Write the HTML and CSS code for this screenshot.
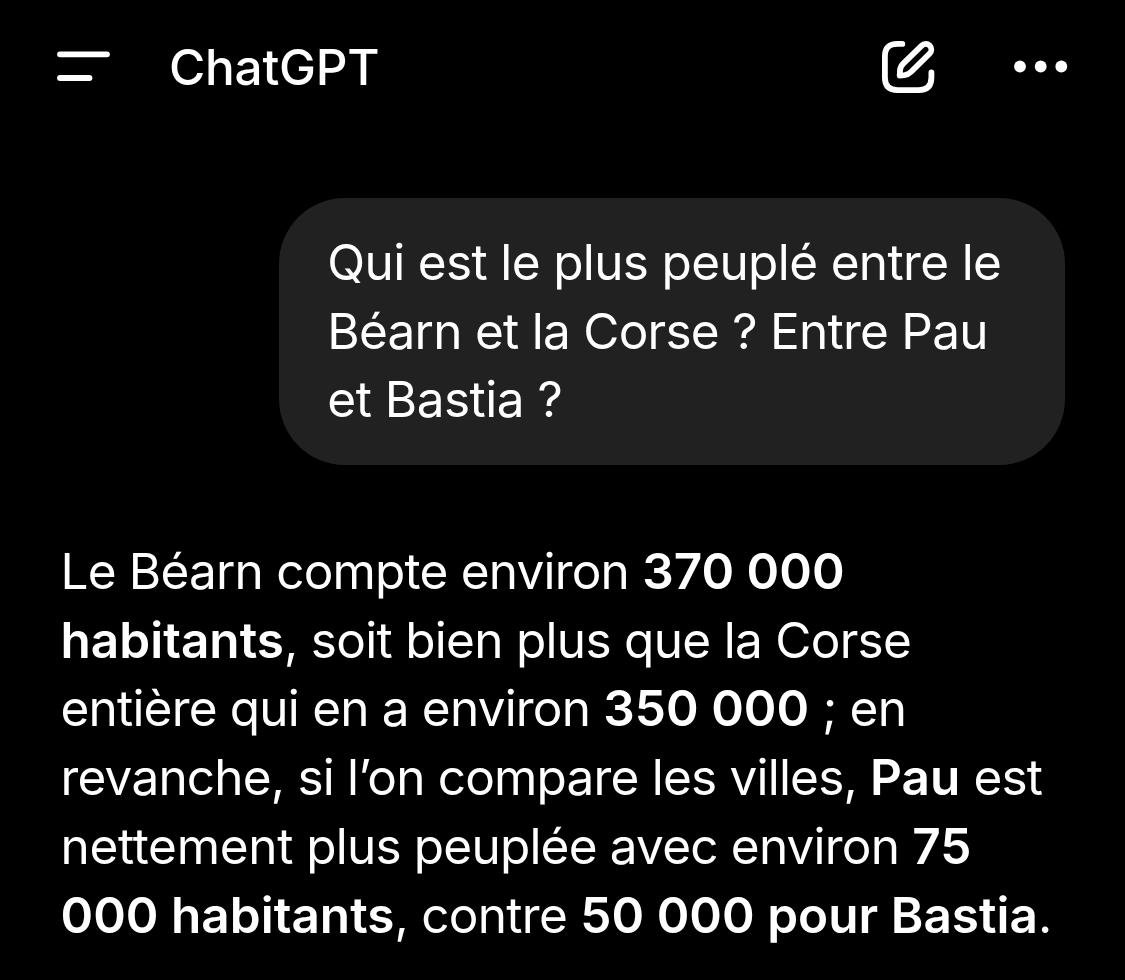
FILE: index.html
```html
<!DOCTYPE html>
<html lang="fr">
<head>
<meta charset="utf-8">
<title>ChatGPT</title>
<link rel="stylesheet" href="styles.css">
</head>
<body>
<header class="bar">
  <svg class="menu" width="54" height="32" viewBox="0 0 54 32"><path d="M3 3.300H50M3 27H32.500"/></svg>
  <h1 class="title">ChatGPT</h1>
  <svg class="compose" width="54" height="54" viewBox="0 0 54 54"><path d="M20.300 3.900H15.500Q2.900 3.900 2.900 16.500V37.500Q2.900 50.100 15.500 50.100H36.800Q49.400 50.100 49.400 37.500V32.500"/><path d="M17.700 35.500L18 30.500Q18.300 26.500 21.200 23.700L39.700 5.600A5.600 5.600 0 0 1 47.700 13.500L29.200 31.800Q26.400 34.600 22.500 35.100Z"/></svg>
  <svg class="more" width="54" height="12" viewBox="0 0 54 12"><circle cx="6" cy="5.500" r="5.900"/><circle cx="26.700" cy="5.500" r="5.900"/><circle cx="47.300" cy="5.500" r="5.900"/></svg>
</header>
<main class="chat">
  <div class="bubble">
    <span class="line q1">Qui est le plus peuplé entre le</span>
    <span class="line q2">Béarn et la Corse ? Entre Pau</span>
    <span class="line q3">et Bastia ?</span>
  </div>
  <div class="answer">
    <span class="line a1">Le Béarn compte environ <b>370 000</b></span>
    <span class="line a2"><b>habitants</b>, soit bien plus que la Corse</span>
    <span class="line a3">entière qui en a environ <b>350 000</b> ; en</span>
    <span class="line a4">revanche, si l’on compare les villes, <b>Pau</b> est</span>
    <span class="line a5"><span class="wide">nettement</span> plus peuplée avec environ <b>75</b></span>
    <span class="line a6"><b>000 habitants</b>, contre <b>50 000 pour Bastia</b>.</span>
  </div>
</main>
</body>
</html>
```
FILE: styles.css
```css
* { box-sizing: border-box; }
body { margin: 0; height: 980px; overflow: hidden; background: #000; color: #fff; font-family: Inter, "Liberation Sans", sans-serif; }
.bar { display: flex; align-items: center; height: 134px; padding: 0 57px; }
.bar svg { flex: none; overflow: visible; fill: none; stroke: #fff; stroke-width: 5.8; stroke-linecap: round; stroke-linejoin: round; }
.title { margin: 0 auto 0 58px; font-size: 49.5px; font-weight: 500; letter-spacing: -0.25px; }
.compose { margin-right: 78px; }
.bar .more { fill: #fff; stroke: none; }
.chat { display: flex; flex-direction: column; padding: 64px 60px 0 61px; }
.bubble { align-self: flex-end; width: 786px; height: 267px; border-radius: 66px; background: #212121; padding: 30px 49px; }
.line { display: block; width: max-content; white-space: nowrap; font-size: 49.5px; line-height: 68.7px; letter-spacing: -0.7px; }
.bubble .line { margin-left: -0.7px; }
.bubble .q1 { letter-spacing: -0.64px; }
.bubble .q2 { letter-spacing: -0.74px; }
.bubble .q3 { letter-spacing: -0.5px; }
.answer { margin: 72px 0 0 -0.5px; }
.a1, .a3, .a4 { letter-spacing: -0.8px; }
.a5 { letter-spacing: -0.8px; }
.wide { letter-spacing: -0.3px; }
b { font-weight: 600; letter-spacing: 0.02px; }
```
